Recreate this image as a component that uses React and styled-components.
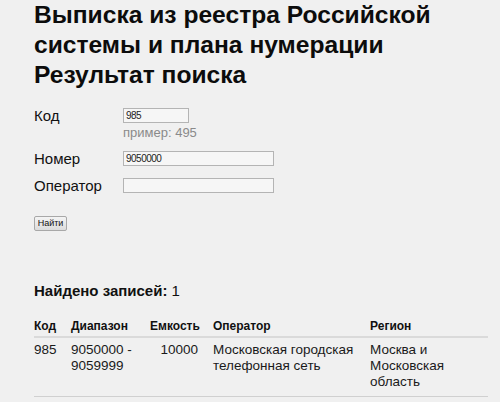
import React from 'react';
import styled, { createGlobalStyle } from 'styled-components';

const GlobalStyle = createGlobalStyle`
  html, body {
    margin: 0;
    padding: 0;
    background: #f0f0f0;
  }
  body {
    font-family: "Liberation Sans", Arial, sans-serif;
    color: #111;
  }
`;

const Page = styled.div`
  padding: 0 12px 0 34px;
`;

const Title = styled.h1`
  margin: 0;
  font-size: 24.6px;
  line-height: 30px;
  font-weight: bold;
  color: #0c0c0c;
`;

const Form = styled.form`
  margin-top: 17px;
`;

const Row = styled.div`
  display: flex;
  align-items: flex-start;
  margin-bottom: ${props => props.gap ?? 9}px;
`;

const Label = styled.label`
  width: 89px;
  flex: none;
  font-size: 15px;
  line-height: 18px;
  color: #111;
`;

const Field = styled.div`
  display: flex;
  flex-direction: column;
  padding-top: 1px;
`;

const Input = styled.input`
  box-sizing: border-box;
  width: ${props => props.w}px;
  height: 15px;
  margin: 0;
  padding: 0 2px;
  border: 1px solid #b4b4b4;
  background: #f6f6f6;
  font-family: "Liberation Sans", Arial, sans-serif;
  font-size: 10px;
  letter-spacing: -0.5px;
  color: #222;
  outline: none;
`;

const Hint = styled.span`
  margin-top: 2px;
  font-size: 13px;
  line-height: 15px;
  color: #8a8a8a;
`;

const Button = styled.button`
  display: block;
  box-sizing: border-box;
  margin-top: 21px;
  width: 33px;
  height: 15px;
  padding: 0;
  border: 1px solid #a8a8a8;
  border-radius: 2px;
  background: linear-gradient(#f4f4f4, #dcdcdc);
  font-family: "Liberation Sans", Arial, sans-serif;
  font-size: 9px;
  line-height: 13px;
  color: #111;
`;

const Found = styled.div`
  margin-top: 51px;
  font-size: 15px;
  line-height: 18px;
  color: #111;

  & > b {
    font-weight: bold;
  }
`;

const Table = styled.div`
  margin-top: 18px;
  width: 454px;
  display: grid;
  grid-template-columns: 37px 79px 48px 172px 118px;
`;

const Head = styled.div`
  font-size: 12px;
  font-weight: bold;
  line-height: 16px;
  padding: 0 0 2px ${props => props.pad || 0}px;
  border-bottom: 2px solid #dadada;
  text-align: ${props => props.right ? 'right' : 'left'};
  color: #111;
`;

const Cell = styled.div`
  font-size: 13.5px;
  line-height: 16px;
  padding: 4px 0 6px ${props => props.pad || 0}px;
  border-bottom: 1px solid #d0d0d0;
  text-align: ${props => props.right ? 'right' : 'left'};
  color: #1a1a1a;
`;

const columns = [
  { title: 'Код', key: 'code' },
  { title: 'Диапазон', key: 'range' },
  { title: 'Емкость', key: 'capacity', right: true },
  { title: 'Оператор', key: 'operator', pad: 15 },
  { title: 'Регион', key: 'region' },
];

const rows = [
  {
    code: '985',
    range: '9050000 - 9059999',
    capacity: '10000',
    operator: 'Московская городская телефонная сеть',
    region: 'Москва и Московская область',
  },
];

const App = () => {
  return (
    <React.Fragment>
      <GlobalStyle />
      <Page>
        <Title>
          Выписка из реестра Российской
          <br />
          системы и плана нумерации
          <br />
          Результат поиска
        </Title>
        <Form onSubmit={e => e.preventDefault()}>
          <Row gap={10}>
            <Label>Код</Label>
            <Field>
              <Input w={66} defaultValue="985" />
              <Hint>пример: 495</Hint>
            </Field>
          </Row>
          <Row>
            <Label>Номер</Label>
            <Field>
              <Input w={151} defaultValue="9050000" />
            </Field>
          </Row>
          <Row gap={0}>
            <Label>Оператор</Label>
            <Field>
              <Input w={151} defaultValue="" />
            </Field>
          </Row>
          <Button type="submit">Найти</Button>
        </Form>
        <Found>
          <b>Найдено записей:</b> 1
        </Found>
        <Table>
          {columns.map(c => (
            <Head key={c.key} right={c.right} pad={c.pad}>{c.title}</Head>
          ))}
          {rows.map((r, i) =>
            columns.map(c => (
              <Cell key={i + c.key} right={c.right} pad={c.pad}>{r[c.key]}</Cell>
            ))
          )}
        </Table>
      </Page>
    </React.Fragment>
  );
};

export default App;
